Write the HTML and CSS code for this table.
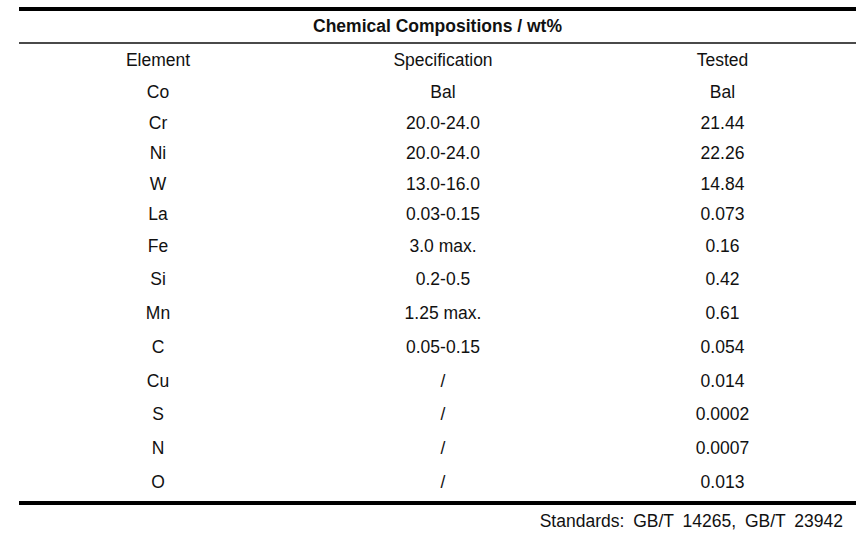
FILE: index.html
```html
<!DOCTYPE html>
<html>
<head>
<meta charset="utf-8">
<link rel="stylesheet" href="styles.css">
</head>
<body>
<div class="sheet">
  <div class="table">
    <div class="title">Chemical Compositions / wt%</div>
    <div class="row head"><span>Element</span><span>Specification</span><span>Tested</span></div>
    <div class="group g1">
      <div class="row"><span>Co</span><span>Bal</span><span>Bal</span></div>
      <div class="row"><span>Cr</span><span>20.0-24.0</span><span>21.44</span></div>
      <div class="row"><span>Ni</span><span>20.0-24.0</span><span>22.26</span></div>
      <div class="row"><span>W</span><span>13.0-16.0</span><span>14.84</span></div>
      <div class="row"><span>La</span><span>0.03-0.15</span><span>0.073</span></div>
    </div>
    <div class="group g2">
      <div class="row"><span>Fe</span><span>3.0 max.</span><span>0.16</span></div>
      <div class="row"><span>Si</span><span>0.2-0.5</span><span>0.42</span></div>
      <div class="row"><span>Mn</span><span>1.25 max.</span><span>0.61</span></div>
      <div class="row"><span>C</span><span>0.05-0.15</span><span>0.054</span></div>
      <div class="row"><span>Cu</span><span>/</span><span>0.014</span></div>
      <div class="row"><span>S</span><span>/</span><span>0.0002</span></div>
      <div class="row"><span>N</span><span>/</span><span>0.0007</span></div>
      <div class="row"><span>O</span><span>/</span><span>0.013</span></div>
    </div>
  </div>
  <div class="note">Standards: GB/T 14265, GB/T 23942</div>
</div>
</body>
</html>
```

FILE: styles.css
```css
html, body {
  margin: 0;
  padding: 0;
  background: #ffffff;
}

body {
  font-family: "Liberation Sans", Arial, sans-serif;
  font-size: 17.5px;
  color: #111111;
}

.sheet {
  width: 837px;
  padding: 7px 0 0 19px;
}

.table {
  border-top: 4px solid #000000;
  border-bottom: 4px solid #000000;
  padding-bottom: 1px;
}

.title {
  height: 31px;
  line-height: 31px;
  text-align: center;
  font-weight: bold;
  border-bottom: 2px solid #4a4a4a;
}

.row {
  display: grid;
  grid-template-columns: 278px 292px 267px;
  text-align: center;
}

.head {
  height: 33px;
  line-height: 33px;
}

.g1 .row {
  height: 30.5px;
  line-height: 30.5px;
}

.g2 .row {
  height: 33.8px;
  line-height: 33.8px;
}

.note {
  text-align: right;
  padding-right: 13px;
  padding-top: 6px;
  font-size: 17.5px;
  word-spacing: 4px;
  line-height: 20px;
}
```
